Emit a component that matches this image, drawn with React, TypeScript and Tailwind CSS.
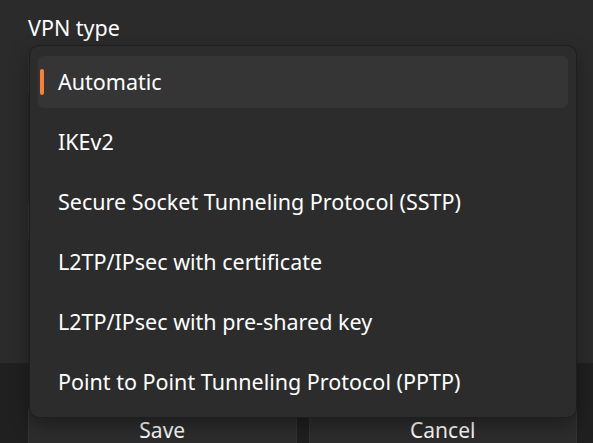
import React from "react";

const vpnTypes = [
  "Automatic",
  "IKEv2",
  "Secure Socket Tunneling Protocol (SSTP)",
  "L2TP/IPsec with certificate",
  "L2TP/IPsec with pre-shared key",
  "Point to Point Tunneling Protocol (PPTP)",
];

export default function App() {
  const selected = 0;

  return (
    <div
      className="relative w-[593px] h-[443px] overflow-hidden bg-[#2b2b2b] text-white flex flex-col"
      style={{ fontFamily: '"Segoe UI", "Noto Sans", sans-serif' }}
    >
      {/* dialog body behind the open dropdown */}
      <div className="flex-1 pl-[28px] pr-[16px] pt-[14px] flex flex-col">
        <span className="text-[21.5px] leading-[28px]">VPN type</span>
        <div className="mt-[10px] h-[45px] rounded-[6px] bg-[#2d2d2d] border border-[#353535]" />
        <div className="mt-[103px] h-[43px] rounded-[6px] bg-[#2e2e2e] border border-[#363636]" />
      </div>

      <div className="h-[80px] bg-[#202020] grid grid-cols-2 gap-3 pl-[28px] pr-[16px] pt-[42px]">
        <button className="h-[50px] rounded-[6px] bg-[#2d2d2d] border border-[#333333] text-[21px] leading-none flex items-center justify-center">
          Save
        </button>
        <button className="h-[50px] rounded-[6px] bg-[#2d2d2d] border border-[#333333] text-[21px] leading-none flex items-center justify-center">
          Cancel
        </button>
      </div>

      {/* open dropdown list */}
      <div className="absolute left-[29px] top-[45px] w-[548px] h-[373px] rounded-[10px] bg-[#2c2c2c] border border-[#1e1e1e] shadow-[0_8px_20px_rgba(0,0,0,0.35)] px-[8px] pt-[6px] pb-[5px] flex flex-col">
        {vpnTypes.map((t, i) => (
          <div
            key={t}
            className={
              i === selected
                ? "my-[4px] h-[52px] rounded-[6px] bg-[#353535] flex items-center"
                : "my-[4px] h-[52px] rounded-[6px] flex items-center pl-[20px]"
            }
          >
            {i === selected && (
              <span className="ml-[2px] mr-[14px] w-[4px] h-[26px] rounded-full bg-[#f7803a]" />
            )}
            <span className="text-[21.5px] leading-none text-white">{t}</span>
          </div>
        ))}
      </div>
    </div>
  );
}
